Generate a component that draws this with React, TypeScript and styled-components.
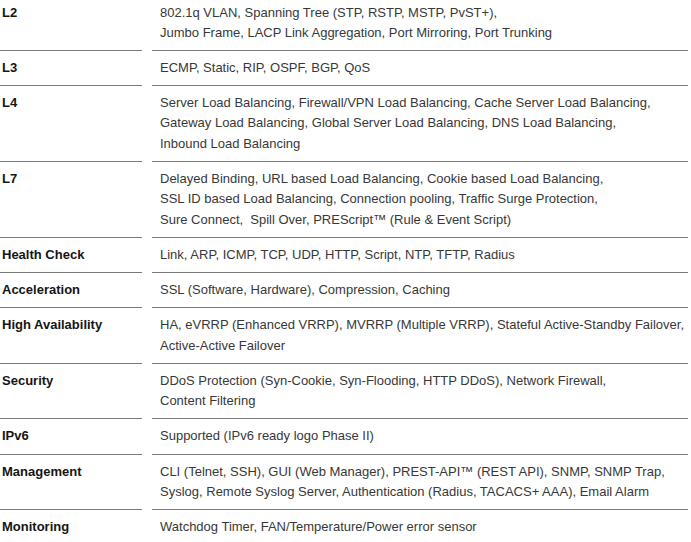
import React from "react";
import styled, { createGlobalStyle } from "styled-components";

const Global = createGlobalStyle`
  html, body { margin: 0; padding: 0; background: #ffffff; }
  body { font-family: "Liberation Sans", Arial, sans-serif; }
`;

const Table = styled.div`
  width: 688px;
  display: flex;
  flex-direction: column;
`;

const Row = styled.div`
  display: grid;
  grid-template-columns: 142px 536px;
  column-gap: 10px;
`;

const Cell = styled.div<{ $first?: boolean; $last?: boolean }>`
  padding: ${(p) => (p.$first ? "3px 0 5.8px" : "7px 0 6.8px")};
  border-bottom: ${(p) => (p.$last ? "none" : "1px solid #7a7a7a")};
  font-size: 13px;
  line-height: 20.4px;
`;

const Label = styled(Cell)`
  padding-left: 2px;
  font-weight: bold;
  color: #151515;
`;

const Value = styled(Cell)`
  padding-left: 8px;
  color: #383838;
`;

const rows: { label: string; lines: string[] }[] = [
  {
    label: "L2",
    lines: [
      "802.1q VLAN, Spanning Tree (STP, RSTP, MSTP, PvST+),",
      "Jumbo Frame, LACP Link Aggregation, Port Mirroring, Port Trunking",
    ],
  },
  { label: "L3", lines: ["ECMP, Static, RIP, OSPF, BGP, QoS"] },
  {
    label: "L4",
    lines: [
      "Server Load Balancing, Firewall/VPN Load Balancing, Cache Server Load Balancing,",
      "Gateway Load Balancing, Global Server Load Balancing, DNS Load Balancing,",
      "Inbound Load Balancing",
    ],
  },
  {
    label: "L7",
    lines: [
      "Delayed Binding, URL based Load Balancing, Cookie based Load Balancing,",
      "SSL ID based Load Balancing, Connection pooling, Traffic Surge Protection,",
      "Sure Connect,\u00a0 Spill Over, PREScript\u2122 (Rule & Event Script)",
    ],
  },
  {
    label: "Health Check",
    lines: ["Link, ARP, ICMP, TCP, UDP, HTTP, Script, NTP, TFTP, Radius"],
  },
  {
    label: "Acceleration",
    lines: ["SSL (Software, Hardware), Compression, Caching"],
  },
  {
    label: "High Availability",
    lines: [
      "HA, eVRRP (Enhanced VRRP), MVRRP (Multiple VRRP), Stateful Active-Standby Failover,",
      "Active-Active Failover",
    ],
  },
  {
    label: "Security",
    lines: [
      "DDoS Protection (Syn-Cookie, Syn-Flooding, HTTP DDoS), Network Firewall,",
      "Content Filtering",
    ],
  },
  { label: "IPv6", lines: ["Supported (IPv6 ready logo Phase II)"] },
  {
    label: "Management",
    lines: [
      "CLI (Telnet, SSH), GUI (Web Manager), PREST-API\u2122 (REST API), SNMP, SNMP Trap,",
      "Syslog, Remote Syslog Server, Authentication (Radius, TACACS+ AAA), Email Alarm",
    ],
  },
  {
    label: "Monitoring",
    lines: ["Watchdog Timer, FAN/Temperature/Power error sensor"],
  },
];

const Line = styled.div`
  white-space: nowrap;
`;

export default function App() {
  return (
    <>
      <Global />
      <Table>
        {rows.map((r, i) => {
          const first = i === 0;
          const last = i === rows.length - 1;
          return (
            <Row key={r.label}>
              <Label $first={first} $last={last}>
                {r.label}
              </Label>
              <Value $first={first} $last={last}>
                {r.lines.map((l, j) => (
                  <Line key={j}>{l}</Line>
                ))}
              </Value>
            </Row>
          );
        })}
      </Table>
    </>
  );
}
